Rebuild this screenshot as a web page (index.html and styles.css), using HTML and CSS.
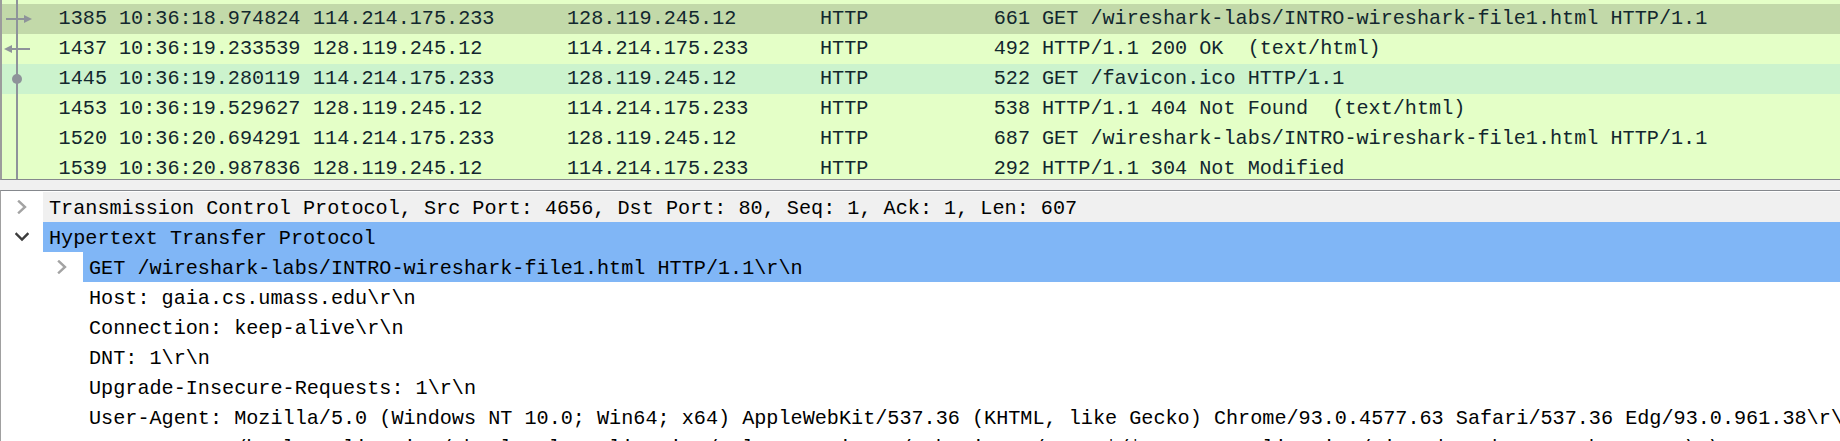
FILE: index.html
```html
<!DOCTYPE html>
<html>
<head>
<meta charset="utf-8">
<link rel="stylesheet" href="styles.css">
</head>
<body>
<div class="plist">
  <div class="prow partial">
    <div class="gut"><svg width="44" height="30"><rect x="14" y="0" width="2" height="30"/></svg></div>
  </div>
  <div class="prow sel">
    <div class="gut"><svg width="44" height="30"><rect x="14" y="0" width="2" height="30"/><rect x="4" y="14" width="20" height="2"/><polygon points="22,11 30,15 22,19"/></svg></div>
    <div class="c no">1385</div><div class="c tm">10:36:18.974824</div><div class="c src">114.214.175.233</div><div class="c dst">128.119.245.12</div><div class="c pr">HTTP</div><div class="c len">661</div><div class="c info">GET /wireshark-labs/INTRO-wireshark-file1.html HTTP/1.1</div>
  </div>
  <div class="prow">
    <div class="gut"><svg width="44" height="30"><rect x="14" y="0" width="2" height="30"/><rect x="8" y="14" width="20" height="2"/><polygon points="2,15 10,11 10,19"/></svg></div>
    <div class="c no">1437</div><div class="c tm">10:36:19.233539</div><div class="c src">128.119.245.12</div><div class="c dst">114.214.175.233</div><div class="c pr">HTTP</div><div class="c len">492</div><div class="c info">HTTP/1.1 200 OK  (text/html)</div>
  </div>
  <div class="prow rel">
    <div class="gut"><svg width="44" height="30"><rect x="14" y="0" width="2" height="30"/><circle cx="15" cy="15" r="5"/></svg></div>
    <div class="c no">1445</div><div class="c tm">10:36:19.280119</div><div class="c src">114.214.175.233</div><div class="c dst">128.119.245.12</div><div class="c pr">HTTP</div><div class="c len">522</div><div class="c info">GET /favicon.ico HTTP/1.1</div>
  </div>
  <div class="prow">
    <div class="gut"><svg width="44" height="30"><rect x="14" y="0" width="2" height="30"/></svg></div>
    <div class="c no">1453</div><div class="c tm">10:36:19.529627</div><div class="c src">128.119.245.12</div><div class="c dst">114.214.175.233</div><div class="c pr">HTTP</div><div class="c len">538</div><div class="c info">HTTP/1.1 404 Not Found  (text/html)</div>
  </div>
  <div class="prow">
    <div class="gut"><svg width="44" height="30"><rect x="14" y="0" width="2" height="30"/></svg></div>
    <div class="c no">1520</div><div class="c tm">10:36:20.694291</div><div class="c src">114.214.175.233</div><div class="c dst">128.119.245.12</div><div class="c pr">HTTP</div><div class="c len">687</div><div class="c info">GET /wireshark-labs/INTRO-wireshark-file1.html HTTP/1.1</div>
  </div>
  <div class="prow">
    <div class="gut"><svg width="44" height="30"><rect x="14" y="0" width="2" height="30"/></svg></div>
    <div class="c no">1539</div><div class="c tm">10:36:20.987836</div><div class="c src">128.119.245.12</div><div class="c dst">114.214.175.233</div><div class="c pr">HTTP</div><div class="c len">292</div><div class="c info">HTTP/1.1 304 Not Modified</div>
  </div>
</div>
<div class="splitter"></div>
<div class="details">
  <div class="drow hover">
    <div class="tog"><svg class="chev closed" width="10" height="14"><polyline points="2,1.5 8,7 2,12.5"/></svg></div>
    <div class="lbl">Transmission Control Protocol, Src Port: 4656, Dst Port: 80, Seq: 1, Ack: 1, Len: 607</div>
  </div>
  <div class="drow hl">
    <div class="tog"><svg class="chev open" width="14" height="10"><polyline points="1.5,2 7,7.5 12.5,2"/></svg></div>
    <div class="lbl">Hypertext Transfer Protocol</div>
  </div>
  <div class="drow hl l1">
    <div class="tog"><svg class="chev closed" width="10" height="14"><polyline points="2,1.5 8,7 2,12.5"/></svg></div>
    <div class="lbl">GET /wireshark-labs/INTRO-wireshark-file1.html HTTP/1.1\r\n</div>
  </div>
  <div class="drow l1"><div class="tog"></div><div class="lbl">Host: gaia.cs.umass.edu\r\n</div></div>
  <div class="drow l1"><div class="tog"></div><div class="lbl">Connection: keep-alive\r\n</div></div>
  <div class="drow l1"><div class="tog"></div><div class="lbl">DNT: 1\r\n</div></div>
  <div class="drow l1"><div class="tog"></div><div class="lbl">Upgrade-Insecure-Requests: 1\r\n</div></div>
  <div class="drow l1"><div class="tog"></div><div class="lbl">User-Agent: Mozilla/5.0 (Windows NT 10.0; Win64; x64) AppleWebKit/537.36 (KHTML, like Gecko) Chrome/93.0.4577.63 Safari/537.36 Edg/93.0.961.38\r\n</div></div>
  <div class="drow l1"><div class="tog"></div><div class="lbl">Accept: text/html,application/xhtml+xml,application/xml;q=0.9,image/webp,image/apng,*/*;q=0.8,application/signed-exchange;v=b3;q=0.9\r\n</div></div>
</div>
</body>
</html>
```
FILE: styles.css
```css
html, body {
  margin: 0;
  padding: 0;
}
body {
  width: 1840px;
  height: 441px;
  overflow: hidden;
  background: #f0f0f0;
  font-family: "Liberation Mono", "DejaVu Sans Mono", monospace;
  font-size: 20.17px;
}
.plist {
  height: 179px;
  overflow: hidden;
  border-left: 2px solid #9c9c9c;
  border-bottom: 1px solid #85888d;
  background: #e4ffc7;
}
.prow {
  display: grid;
  grid-template-columns: 44px 67px 194px 254px 253px 138px 84px 1fr;
  height: 30px;
  line-height: 30px;
  background: #e4ffc7;
  color: #12272e;
  white-space: pre;
}
.prow.partial {
  margin-top: -26px;
}
.prow.sel {
  background: #c2d9a9;
}
.prow.rel {
  background: #ccf3cd;
}
.gut svg {
  display: block;
  fill: #8e939a;
}
.c {
  overflow: hidden;
  padding-left: 6px;
}
.c.no, .c.len {
  text-align: right;
  padding-left: 0;
  padding-right: 6px;
}
.splitter {
  height: 10px;
}
.details {
  height: 260px;
  border-top: 1px solid #85888d;
  border-left: 1px solid #a0a0a0;
  background: #ffffff;
  padding-top: 1px;
  color: #000000;
}
.drow {
  display: flex;
  height: 30px;
  line-height: 34px;
  white-space: pre;
  overflow: hidden;
}
.drow.l1 {
  padding-left: 40px;
}
.tog {
  flex: 0 0 42px;
  display: flex;
  align-items: center;
  justify-content: center;
  height: 30px;
}
.lbl {
  flex: 1 0 auto;
  padding-left: 6px;
}
.drow.hover .lbl {
  background: #f0f0f0;
}
.drow.hl .lbl {
  background: #80b6f6;
}
.chev {
  display: block;
  fill: none;
  stroke-width: 2.4;
  stroke-linecap: square;
}
.chev.closed {
  stroke: #a3a3a3;
}
.chev.open {
  stroke: #3c3c3c;
}
```
